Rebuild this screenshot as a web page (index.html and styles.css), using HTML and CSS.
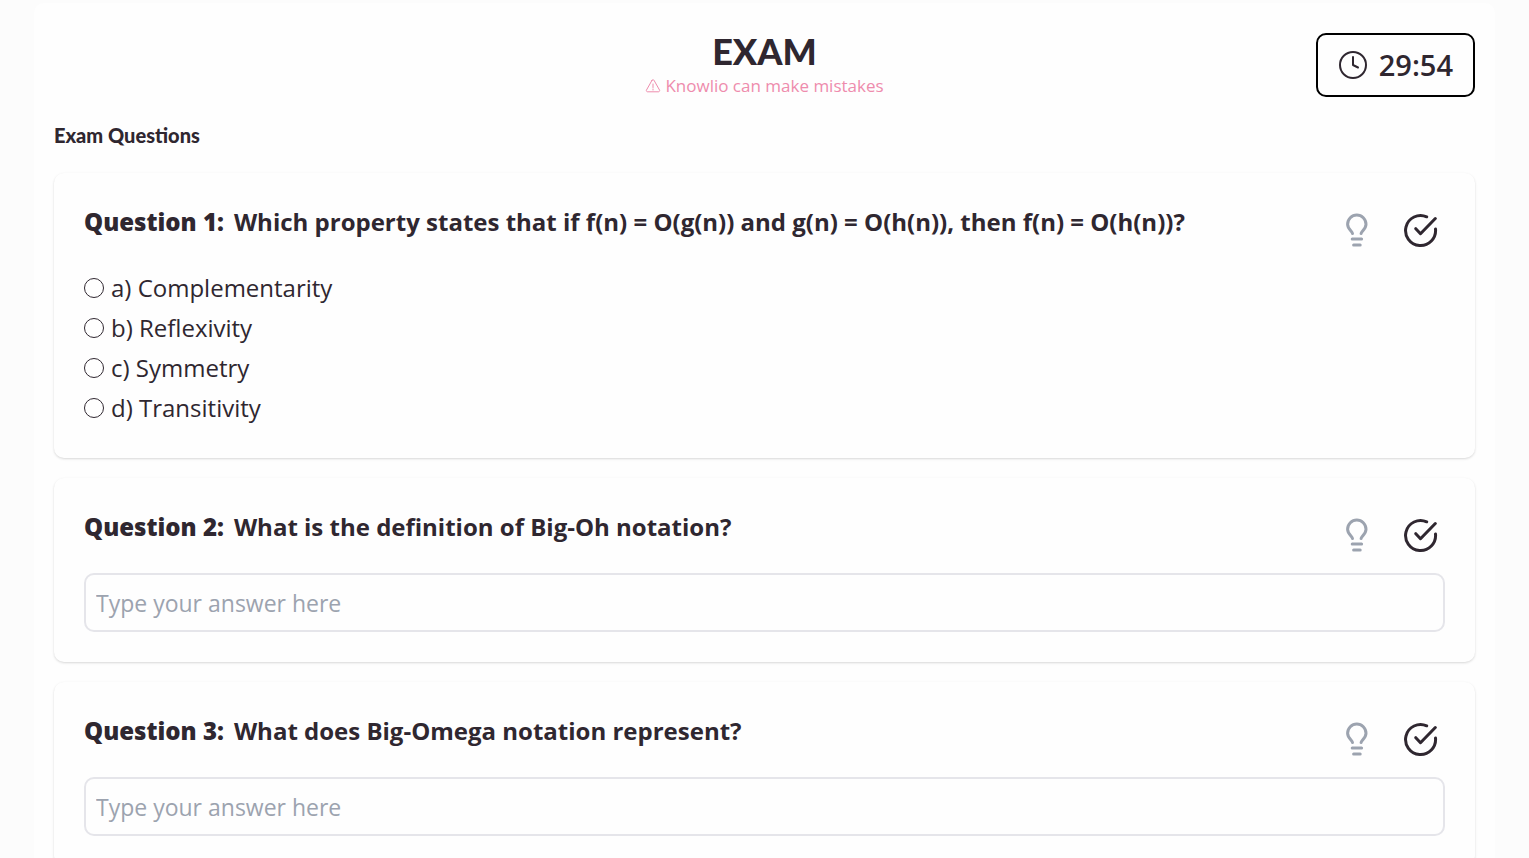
FILE: index.html
```html
<!DOCTYPE html>
<html lang="en">
<head>
<meta charset="utf-8">
<meta name="viewport" content="width=device-width, initial-scale=1">
<title>Exam</title>
<link rel="stylesheet" href="styles.css">
</head>
<body>
<svg class="sprite" aria-hidden="true">
  <symbol id="bulb" viewBox="0 0 36 36">
    <path d="M14.500 20.500c-.4-2.200-4.900-4.600-4.900-9.300a9.200 9.200 0 0 1 18.400 0c0 4.700-4.500 7.100-4.900 9.300M14.200 26h9.400M15.600 32h6.600"/>
  </symbol>
  <symbol id="check" viewBox="0 0 36 36">
    <path d="M24.700 3.800A15 15 0 1 0 33.500 16M13.800 15.700l4.700 5L33.300 5.500"/>
  </symbol>
</svg>
<main class="exam">
  <header class="top">
    <div class="heading">
      <h1 class="title">EXAM</h1>
      <p class="notice">
        <svg class="warn" viewBox="0 0 16 16" aria-hidden="true"><path d="M7 2.300 1.500 12a1.200 1.200 0 0 0 1 1.800h11a1.200 1.200 0 0 0 1-1.800L9 2.300a1.150 1.150 0 0 0-2 0zM8 6v3.500M8 11v1"/></svg>
        <span>Knowlio can make mistakes</span>
      </p>
    </div>
    <div class="timer">
      <svg class="clock" viewBox="0 0 30 30" aria-hidden="true"><circle cx="15" cy="15" r="13"/><path d="M15 7v8l5 2.500"/></svg>
      <span>29:54</span>
    </div>
  </header>
  <h2 class="subtitle">Exam Questions</h2>
  <div class="questions">
    <section class="card">
      <div class="question">
        <h3 class="text" id="q1"><span class="number">Question 1:</span>Which property states that if f(n) = O(g(n)) and g(n) = O(h(n)), then f(n) = O(h(n))?</h3>
        <div class="actions">
          <button class="action hint" type="button" aria-label="Hint"><svg><use href="#bulb"/></svg></button>
          <button class="action" type="button" aria-label="Check answer"><svg><use href="#check"/></svg></button>
        </div>
      </div>
      <div class="options" role="radiogroup" aria-labelledby="q1">
        <label class="option"><input class="radio" type="radio" name="q1">a) Complementarity</label>
        <label class="option"><input class="radio" type="radio" name="q1">b) Reflexivity</label>
        <label class="option"><input class="radio" type="radio" name="q1">c) Symmetry</label>
        <label class="option"><input class="radio" type="radio" name="q1">d) Transitivity</label>
      </div>
    </section>
    <section class="card">
      <div class="question">
        <h3 class="text" id="q2"><span class="number">Question 2:</span>What is the definition of Big-Oh notation?</h3>
        <div class="actions">
          <button class="action hint" type="button" aria-label="Hint"><svg><use href="#bulb"/></svg></button>
          <button class="action" type="button" aria-label="Check answer"><svg><use href="#check"/></svg></button>
        </div>
      </div>
      <input class="answer" type="text" placeholder="Type your answer here" aria-labelledby="q2">
    </section>
    <section class="card">
      <div class="question">
        <h3 class="text" id="q3"><span class="number">Question 3:</span>What does Big-Omega notation represent?</h3>
        <div class="actions">
          <button class="action hint" type="button" aria-label="Hint"><svg><use href="#bulb"/></svg></button>
          <button class="action" type="button" aria-label="Check answer"><svg><use href="#check"/></svg></button>
        </div>
      </div>
      <input class="answer" type="text" placeholder="Type your answer here" aria-labelledby="q3">
    </section>
  </div>
</main>
</body>
</html>
```
FILE: styles.css
```css
* { box-sizing: border-box; margin: 0; }
html { scrollbar-width: none; }
body {
  padding: 3px 34px 20px;
  background: #fcfcfc;
  color: #2f2730;
  font: 24px/40px "Open Sans", "Noto Sans", sans-serif;
}
.sprite { display: none; }
svg { fill: none; stroke: currentColor; stroke-linecap: round; stroke-linejoin: round; }
.exam { padding: 30px 20px; background: #fefefe; border-radius: 10px; }
.top { display: grid; grid-template-columns: 1fr auto 1fr; align-items: start; }
.heading { grid-column: 2; text-align: center; }
.title { font: 900 36px/36px Lato, sans-serif; }
.notice {
  display: flex;
  align-items: center;
  justify-content: center;
  gap: 4px;
  color: #ee8cad;
  font-size: 17px;
  line-height: 34px;
}
.warn { width: 16px; height: 16px; }
.timer {
  justify-self: end;
  display: flex;
  align-items: center;
  gap: 11px;
  padding: 10px 20px;
  border: 2px solid #000;
  border-radius: 10px;
  font-size: 29px;
  font-weight: 600;
}
.clock { width: 30px; height: 30px; stroke-width: 2; }
.subtitle { margin: 15px 0 20px; font: 900 20px/35px Lato, sans-serif; }
.questions { display: grid; gap: 20px; }
.card {
  padding: 30px;
  border-radius: 10px;
  background: #fefefe;
  box-shadow: 0 1px 3px rgba(0, 0, 0, .1), 0 1px 2px rgba(0, 0, 0, .06);
}
.question { display: flex; justify-content: space-between; gap: 20px; margin-bottom: 10px; }
.text { font-size: 24px; font-weight: 700; line-height: 38px; }
.number { margin-right: 10px; font-weight: 800; }
.actions { display: flex; gap: 14px; }
.action {
  display: grid;
  place-items: center;
  width: 50px;
  height: 55px;
  padding: 0;
  border: 0;
  background: none;
  color: #2f2730;
  stroke-width: 3;
}
.action svg { width: 36px; height: 36px; }
.hint { color: #9ca3af; }
.options { display: grid; }
.option { display: flex; align-items: center; gap: 7px; }
.radio {
  appearance: none;
  width: 20px;
  height: 20px;
  margin: 0;
  border: 1px solid #2f2730;
  border-radius: 50%;
  background: #fff;
}
.radio:checked { background: #2f2730; box-shadow: inset 0 0 0 4px #fff; }
.answer {
  display: block;
  width: 100%;
  height: 59px;
  padding: 10px;
  border: 2px solid #e5e5ea;
  border-radius: 10px;
  background: #fefefe;
  color: inherit;
  font: inherit;
  font-size: 23px;
}
.answer::placeholder { color: #9ca3af; opacity: 1; }
```
